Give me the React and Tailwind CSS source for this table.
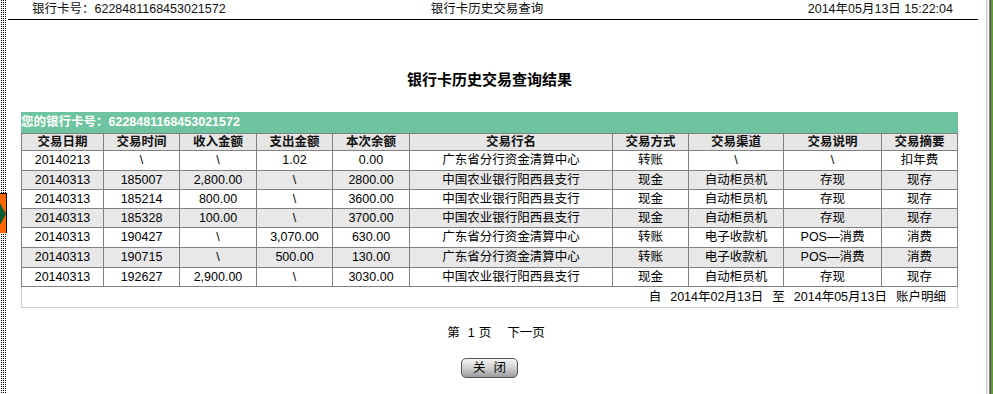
import React from "react";

const FONT = { fontFamily: '"Liberation Sans","Noto Sans CJK SC",sans-serif' };

const cols = [83, 76, 77, 76, 77, 203, 76, 95, 98, 76];
const heads = ["交易日期", "交易时间", "收入金额", "支出金额", "本次余额", "交易行名", "交易方式", "交易渠道", "交易说明", "交易摘要"];
const rows = [
  { h: "h-[20px]", bg: "bg-white", c: ["20140213", "\\", "\\", "1.02", "0.00", "广东省分行资金清算中心", "转账", "\\", "\\", "扣年费"] },
  { h: "h-[19px]", bg: "bg-[#e8e8e8]", c: ["20140313", "185007", "2,800.00", "\\", "2800.00", "中国农业银行阳西县支行", "现金", "自动柜员机", "存现", "现存"] },
  { h: "h-[19px]", bg: "bg-white", c: ["20140313", "185214", "800.00", "\\", "3600.00", "中国农业银行阳西县支行", "现金", "自动柜员机", "存现", "现存"] },
  { h: "h-[19px]", bg: "bg-[#e8e8e8]", c: ["20140313", "185328", "100.00", "\\", "3700.00", "中国农业银行阳西县支行", "现金", "自动柜员机", "存现", "现存"] },
  { h: "h-[20px]", bg: "bg-white", c: ["20140313", "190427", "\\", "3,070.00", "630.00", "广东省分行资金清算中心", "转账", "电子收款机", "POS—消费", "消费"] },
  { h: "h-[20px]", bg: "bg-[#e8e8e8]", c: ["20140313", "190715", "\\", "500.00", "130.00", "广东省分行资金清算中心", "转账", "电子收款机", "POS—消费", "消费"] },
  { h: "h-[19px]", bg: "bg-white", c: ["20140313", "192627", "2,900.00", "\\", "3030.00", "中国农业银行阳西县支行", "现金", "自动柜员机", "存现", "现存"] },
];

function LeftStrip() {
  return (
    <div className="w-[7px] h-full flex flex-col bg-white bg-[conic-gradient(#000_25%,transparent_0)] bg-[length:2px_2px]">
      <div className="mt-[193px] h-[40px] w-[7px] bg-[#ff6600] border-t border-r border-black flex items-center">
        <svg width="6" height="22" viewBox="0 0 6 22" className="block">
          <polygon points="0,0 6,11 0,22" fill="#0b5a34" />
        </svg>
      </div>
    </div>
  );
}

function RightEdge() {
  return (
    <div className="flex h-full">
      <div className="w-px bg-[#d4d0c8]" />
      <div className="w-px bg-[#e8e6e0]" />
      <div className="w-px bg-white" />
      <div className="w-px bg-[#808080]" />
      <div className="w-px bg-[#555555]" />
      <div className="w-[2px] bg-[#5f9b34]" />
    </div>
  );
}

export default function App() {
  return (
    <div className="w-[993px] h-[394px] overflow-hidden flex bg-white text-black" style={FONT}>
      <LeftStrip />
      <div className="w-px" />
      <div className="flex-1 flex flex-col">
        <div className="w-[970px] h-[20px] border-b border-black grid grid-cols-[1fr_auto_1fr] items-center text-[12.5px] leading-[19px] text-[#111]">
          <div className="pl-[24px]">银行卡号：6228481168453021572</div>
          <div className="pr-[12px]">银行卡历史交易查询</div>
          <div className="text-right pr-[25px]">2014年05月13日 15:22:04</div>
        </div>

        <div className="ml-[13px] w-[937px] flex flex-col">
          <div className="mt-[50px] h-[20px] leading-[20px] text-center text-[15px] font-bold">银行卡历史交易查询结果</div>

          <div className="mt-[22px] h-[21px] bg-[#6ec4a0] text-white font-bold text-[12.5px] leading-[16px] pt-[2px]">
            您的银行卡号：6228481168453021572
          </div>

          <table className="table-fixed border-separate border-spacing-0 w-[937px] text-[12.5px]">
            <colgroup>
              {cols.map((w, i) => (
                <col key={i} style={{ width: w }} />
              ))}
            </colgroup>
            <thead>
              <tr>
                {heads.map((h, i) => (
                  <th
                    key={i}
                    className={
                      "h-[18px] p-0 leading-[15px] bg-[#e6e6e6] font-bold text-center text-[#111] border-t border-b border-r border-[#808080] whitespace-nowrap " +
                      (i === 0 ? "border-l" : "")
                    }
                  >
                    {h}
                  </th>
                ))}
              </tr>
            </thead>
            <tbody>
              {rows.map((r, ri) => (
                <tr key={ri}>
                  {r.c.map((c, ci) => (
                    <td
                      key={ci}
                      className={
                        r.h + " " + r.bg +
                        " p-0 leading-[15px] text-center whitespace-nowrap overflow-hidden border-b border-r border-[#808080] " +
                        (ci === 0 ? "border-l" : "")
                      }
                    >
                      {c}
                    </td>
                  ))}
                </tr>
              ))}
              <tr>
                <td colSpan={10} className="h-[21px] p-0 pr-[11px] text-right leading-[15px] border-l border-r border-b border-[#d4d0c8] bg-white whitespace-nowrap">
                  <span>自</span>
                  <span className="ml-[9px]">2014年02月13日</span>
                  <span className="ml-[9px]">至</span>
                  <span className="ml-[9px]">2014年05月13日</span>
                  <span className="ml-[9px]">账户明细</span>
                </td>
              </tr>
            </tbody>
          </table>

          <div className="mt-[16px] h-[18px] flex justify-center items-center pl-[13px] text-[12.5px] leading-[18px]">
            <span>第</span>
            <span className="ml-[8px]">1</span>
            <span className="ml-[4px]">页</span>
            <span className="ml-[16px]">下一页</span>
          </div>

          <div className="mt-[16px] flex justify-center">
            <button className="w-[57px] h-[20px] rounded-[5px] border border-[#555] bg-gradient-to-b from-[#f4f4f4] via-[#d0d0d0] to-[#9c9c9c] text-[12.5px] leading-[18px] text-black flex items-center justify-center">
              <span>关</span>
              <span className="ml-[8px]">闭</span>
            </button>
          </div>
        </div>
      </div>
      <RightEdge />
    </div>
  );
}
